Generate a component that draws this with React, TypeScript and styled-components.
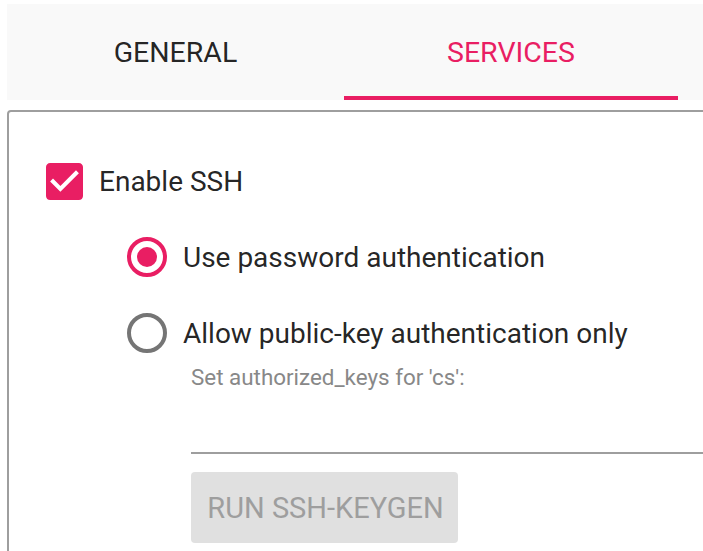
import React from "react";
import styled, { createGlobalStyle } from "styled-components";

const Global = createGlobalStyle`
  html, body { margin: 0; padding: 0; background: #ffffff; overflow: hidden; }
  body { font-family: Roboto, "Noto Sans", Arial, sans-serif; color: rgba(0,0,0,0.87); }
`;

const PINK = "#e91e63";

const Page = styled.div`
  width: 1100px;
  padding: 4px 0 0 7px;
  display: flex;
  flex-direction: column;
`;

const TabBar = styled.div`
  display: flex;
  height: 96px;
  background: #f9f9f9;
`;

const Tab = styled.div<{ $active?: boolean; $w: number }>`
  width: ${(p) => p.$w}px;
  display: flex;
  align-items: center;
  justify-content: center;
  font-size: 28.5px;
  text-transform: uppercase;
  color: ${(p) => (p.$active ? PINK : "rgba(0,0,0,0.87)")};
  box-sizing: border-box;
  border-bottom: 4px solid ${(p) => (p.$active ? PINK : "transparent")};
  padding-top: 4px;
`;

const Panel = styled.div`
  margin-top: 10px;
  border: 2px solid #9e9e9e;
  border-radius: 4px;
  height: 600px;
  padding: 51px 0 0 37px;
  display: flex;
  flex-direction: column;
`;

const CheckRow = styled.label`
  display: flex;
  align-items: center;
  gap: 16px;
  height: 37px;
  font-size: 28px;
`;

const Box = styled.span`
  width: 37px;
  height: 37px;
  display: block;
`;

const Options = styled.div`
  display: flex;
  flex-direction: column;
  padding-left: 81px;
  margin-top: 37px;
  gap: 36px;
`;

const RadioRow = styled.label`
  display: flex;
  align-items: center;
  gap: 16px;
  height: 40px;
  font-size: 28px;
`;

const Sub = styled.div`
  display: flex;
  flex-direction: column;
  padding-left: 145px;
  margin-top: 12px;
`;

const Hint = styled.div`
  font-size: 22.4px;
  line-height: 24px;
  color: #888888;
`;

const Field = styled.div`
  height: 63px;
  border-bottom: 2px solid #9e9e9e;
`;

const Button = styled.button`
  margin-top: 18px;
  width: 267px;
  height: 71px;
  border: none;
  border-radius: 4px;
  background: #e0e0e0;
  color: #9e9e9e;
  font-family: Roboto, "Noto Sans", Arial, sans-serif;
  font-size: 29px;
  text-transform: uppercase;
  padding: 0 0 0 2px;
`;

const Checkbox = () => (
  <Box>
    <svg width="37" height="37" viewBox="3 3 18 18">
      <path
        fill={PINK}
        d="M19 3H5c-1.11 0-2 .9-2 2v14c0 1.1.89 2 2 2h14c1.11 0 2-.9 2-2V5c0-1.1-.89-2-2-2zm-9 14l-5-5 1.41-1.41L10 14.17l7.59-7.59L19 8l-9 9z"
      />
    </svg>
  </Box>
);

const Radio = ({ checked }: { checked?: boolean }) => (
  <svg width="40" height="40" viewBox="2 2 20 20">
    <circle
      cx="12"
      cy="12"
      r="9"
      fill="none"
      stroke={checked ? PINK : "#757575"}
      strokeWidth="2"
    />
    {checked && <circle cx="12" cy="12" r="5" fill={PINK} />}
  </svg>
);

export default function App() {
  return (
    <>
      <Global />
      <Page>
        <TabBar>
          <Tab $w={337}>General</Tab>
          <Tab $w={334} $active>
            Services
          </Tab>
        </TabBar>
        <Panel>
          <CheckRow>
            <Checkbox />
            Enable SSH
          </CheckRow>
          <Options>
            <RadioRow>
              <Radio checked />
              Use password authentication
            </RadioRow>
            <RadioRow>
              <Radio />
              Allow public-key authentication only
            </RadioRow>
          </Options>
          <Sub>
            <Hint>Set authorized_keys for 'cs':</Hint>
            <Field />
            <div>
              <Button>Run SSH-keygen</Button>
            </div>
          </Sub>
        </Panel>
      </Page>
    </>
  );
}
